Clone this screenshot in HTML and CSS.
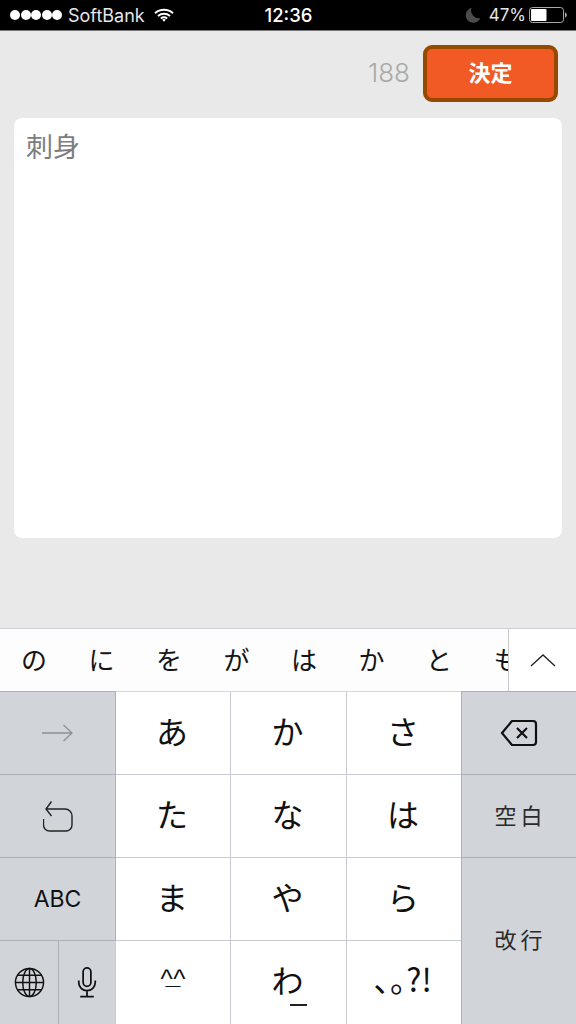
FILE: index.html
```html
<!DOCTYPE html>
<html lang="ja">
<head>
<meta charset="utf-8">
<title>刺身</title>
<link rel="stylesheet" href="styles.css">
</head>
<body>
<header class="status">
  <div class="status-left">
    <span class="dots"><i></i><i></i><i></i><i></i><i></i></span>
    <span class="carrier">SoftBank</span>
    <svg class="wifi" viewBox="0 0 20 14" width="20" height="14"><path d="M1 5.200C6 .6 14 .6 19 5.200M4 8C7.500 5 12.500 5 16 8M6.800 10.500C8.600 9.200 11.400 9.200 13.200 10.500" fill="none" stroke="#fff" stroke-width="1.900"/><path d="M8.200 11.800L10 10.800l1.800 1L10 13.800z" fill="#fff"/></svg>
  </div>
  <div class="time">12:36</div>
  <div class="status-right">
    <svg class="moon" viewBox="0 0 16 16" width="16" height="16"><path d="M6.500.8A7.600 7.600 0 1 0 15.400 11 7.800 7.800 0 0 1 6.500.8z" fill="#4c4c4c"/></svg>
    <span class="pct">47%</span>
    <svg class="battery" viewBox="0 0 38 16" width="38" height="16"><rect x=".5" y=".5" width="34" height="15" rx="3" fill="none" stroke="#aaa"/><rect x="2" y="2" width="15.500" height="12" rx="1" fill="#fff"/><path d="M36 5.500c1.300.3 1.800 1.300 1.800 2.500s-.5 2.200-1.800 2.500z" fill="#aaa"/></svg>
  </div>
</header>

<main class="editor">
  <div class="toolbar">
    <span class="count">188</span>
    <button class="submit">決定</button>
  </div>
  <div class="note">刺身</div>
</main>

<section class="suggest">
  <div class="suggest-list">
    <span>の</span><span>に</span><span>を</span><span>が</span><span>は</span><span>か</span><span>と</span><span>も</span>
  </div>
  <div class="suggest-more">
    <svg viewBox="0 0 26 14" width="26" height="14"><path d="M1 13L13 2l12 11" fill="none" stroke="#222" stroke-width="1.300"/></svg>
  </div>
</section>

<section class="keyboard">
  <div class="key fn">
    <svg viewBox="0 0 31 18" width="31" height="18"><path d="M0 9h30M21.500 1l8.500 8-8.500 8" fill="none" stroke="#8e9096" stroke-width="1.300"/></svg>
  </div>
  <div class="key kana">あ</div>
  <div class="key kana">か</div>
  <div class="key kana">さ</div>
  <div class="key fn">
    <svg viewBox="0 0 38 28" width="38" height="28"><path d="M12 2h21a3 3 0 0 1 3 3v18a3 3 0 0 1-3 3H12L2 14z" fill="none" stroke="#111" stroke-width="2.200" stroke-linejoin="round"/><path d="M17 9l10 10M27 9L17 19" fill="none" stroke="#111" stroke-width="2.200"/></svg>
  </div>

  <div class="key fn">
    <svg viewBox="0 0 30 31" width="30" height="31"><path d="M8.500.5L3 8l5.500 7M3 8h19a7 7 0 0 1 7 7v9a6 6 0 0 1-6 6H6.500a6 6 0 0 1-6-6v-6" fill="none" stroke="#222" stroke-width="1.400"/></svg>
  </div>
  <div class="key kana">た</div>
  <div class="key kana">な</div>
  <div class="key kana">は</div>
  <div class="key fn label wide">空白</div>

  <div class="key fn label latin">ABC</div>
  <div class="key kana">ま</div>
  <div class="key kana">や</div>
  <div class="key kana">ら</div>
  <div class="key fn label wide enter">改行</div>

  <div class="split">
    <div class="key fn">
      <svg viewBox="0 0 32 32" width="31" height="31"><g fill="none" stroke="#111" stroke-width="1.500"><circle cx="16" cy="16" r="14.500"/><ellipse cx="16" cy="16" rx="7" ry="14.500"/><path d="M16 1.500v29M1.500 16h29M3.500 8.500h25M3.500 23.500h25"/></g></svg>
    </div>
    <div class="key fn">
      <svg viewBox="0 0 20 32" width="20" height="31"><rect x="6" y="1" width="8" height="19" rx="4" fill="none" stroke="#111" stroke-width="1.800"/><path d="M1.500 14v2a8.500 8.500 0 0 0 17 0v-2M10 25v5M3 30.500h14" fill="none" stroke="#111" stroke-width="1.800"/></svg>
    </div>
  </div>
  <div class="key kana face"><span>^</span><span class="mouth">_</span><span>^</span></div>
  <div class="key kana wa-key">わ<span class="wa-line"></span></div>
  <div class="key kana punct">､｡?!</div>
</section>
</body>
</html>
```
FILE: styles.css
```css
* { box-sizing: border-box; }
html, body { margin: 0; padding: 0; }
body {
  width: 576px;
  height: 1024px;
  overflow: hidden;
  display: flex;
  flex-direction: column;
  background: #e9e9e9;
  font-family: "Noto Sans CJK JP", "Liberation Sans", sans-serif;
  color: #111;
}

/* status bar */
.status {
  height: 31px;
  flex: none;
  background: #000;
  border-bottom: 1px solid #777;
  color: #fff;
  display: grid;
  grid-template-columns: 1fr auto 1fr;
  align-items: center;
  padding: 0 9px 0 10px;
  font-family: Inter, "Liberation Sans", sans-serif;
  font-size: 17.500px;
}
.status-left, .status-right { display: flex; align-items: center; }
.status-right { justify-content: flex-end; }
.dots { display: flex; gap: .5px; }
.dots i { width: 10px; height: 10px; border-radius: 50%; background: #fff; display: block; }
.carrier { margin-left: 6px; color: #e6e6e6; font-size: 18px; }
.wifi { margin-left: 9px; }
.time { font-size: 18.500px; font-weight: 500; }
.moon { margin-right: 8px; }
.pct { margin-right: 3px; color: #e6e6e6; font-size: 17px; }

/* editor */
.editor {
  flex: 1;
  display: flex;
  flex-direction: column;
  padding: 14px 14px 90px;
}
.toolbar {
  display: flex;
  justify-content: flex-end;
  align-items: center;
  gap: 13px;
  height: 57px;
  padding-right: 4px;
  margin-bottom: 16px;
}
.count {
  font-family: Inter, "Liberation Sans", sans-serif;
  font-weight: 300;
  font-size: 26px;
  color: #a9a9a9;
  padding-bottom: 2px;
}
.submit {
  width: 135px;
  height: 57px;
  border: 4px solid #964a00;
  border-radius: 9px;
  background: #f15a24;
  color: #fff;
  font-family: inherit;
  font-size: 22px;
  font-weight: 700;
  padding: 0 0 5px;
}
.note {
  flex: 1;
  background: #fff;
  border-radius: 8px;
  padding: 8px 12px;
  font-size: 27px;
  line-height: 40px;
  color: #7d7d7d;
}

/* suggestions */
.suggest {
  flex: none;
  height: 64px;
  background: #fdfdfe;
  border-top: 1px solid #cfd0d6;
  border-bottom: 1px solid #d8d9df;
  display: flex;
}
.suggest-list {
  width: 508px;
  overflow: hidden;
  display: flex;
  align-items: center;
  padding: 0 0 4px 21px;
  gap: 41.500px;
  font-size: 26px;
  white-space: nowrap;
  color: #151515;
}
.suggest-list span { flex: none; }
.suggest-more {
  flex: 1;
  border-left: 1px solid #c9cad0;
  display: flex;
  align-items: center;
  justify-content: center;
  background: #fff;
}

/* keyboard */
.keyboard {
  flex: none;
  height: 332px;
  display: grid;
  grid-template-columns: 115px 114px 115px 114px 114px;
  grid-template-rows: 82px 82px 82px 83px;
  gap: 1px;
  background: #c9cad2;
}
.key {
  display: flex;
  align-items: center;
  justify-content: center;
  min-width: 0;
}
.kana { background: #fff; font-size: 32px; color: #111; padding: 0 2px 7px 0; }
.fn { background: #d1d4d9; box-shadow: 0 0 0 1px #aeb0b7; position: relative; }
.label { font-size: 22px; color: #2a2a2a; padding-bottom: 4px; }
.wide { letter-spacing: 4px; font-size: 22px; padding-left: 3px; }
.enter { padding-bottom: 6px; }
.latin { font-family: Inter, "Liberation Sans", sans-serif; font-size: 23px; letter-spacing: 0; padding: 0; color: #111; }
.enter { grid-row: span 2; grid-column: 5; }
.split {
  display: grid;
  grid-template-columns: 58px 56px;
  gap: 1px;
  background: #aeb0b7;
}
.split .key { box-shadow: none; }
.face { font-size: 26px; font-weight: 400; font-family: "Liberation Sans", sans-serif; padding: 0 0 6px; }
.mouth { margin: 0 -7px; position: relative; top: -4px; font-weight: 700; }
.wa-key { position: relative; }
.wa-line { position: absolute; left: 59px; bottom: 18px; width: 17px; height: 2px; background: #222; }
.punct { font-size: 32px; padding-bottom: 10px; }
```
